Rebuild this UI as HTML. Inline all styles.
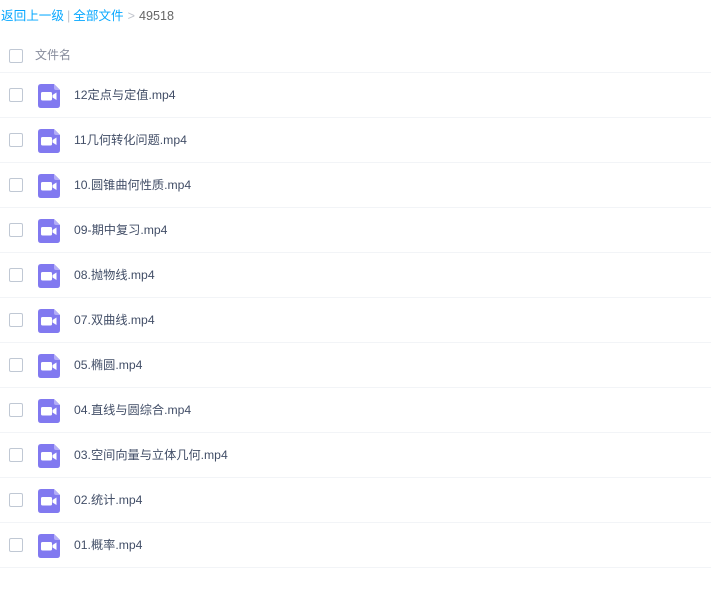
<!DOCTYPE html>
<html><head><meta charset="utf-8"><style>
body{margin:0;background:#fff;font-family:"Liberation Sans","Noto Sans CJK SC",sans-serif;font-size:12px;color:#424e67;width:711px;height:595px;overflow:hidden;position:relative}
.bc{position:absolute;left:1px;top:8px;line-height:16px;color:#06a7ff;font-size:12.6px}
.bc .g{color:#c0c4cc;margin:0 4px}
.bc .n{color:#666}
.bc .s{color:#c0c4cc;margin:0 3px}
.hd{position:absolute;left:0;top:40px;width:711px;height:32px;border-bottom:1px solid #f2f4f7}
.cb{position:absolute;left:9px;width:12px;height:12px;border:1px solid #c0c8d4;border-radius:2px;background:#fff}
.row{position:absolute;left:0;width:711px;height:44px;border-bottom:1px solid #f2f4f7}
.ic{position:absolute;left:38px;top:11px}
.nm{position:absolute;left:74px;top:14px;line-height:16px;font-size:12.2px;color:#424e67}
</style></head><body>
<div class="bc">返回上一级<span class="s">|</span>全部文件<span class="g">&gt;</span><span class="n">49518</span></div>
<div class="hd"><div class="cb" style="top:9px"></div><div style="position:absolute;left:35px;top:7px;line-height:16px;color:#878c9c">文件名</div></div>
<div id="rows"></div>
<script>
var n=["12定点与定值.mp4","11几何转化问题.mp4","10.圆锥曲何性质.mp4","09-期中复习.mp4","08.抛物线.mp4","07.双曲线.mp4","05.椭圆.mp4","04.直线与圆综合.mp4","03.空间向量与立体几何.mp4","02.统计.mp4","01.概率.mp4"];
var h="";
for(var i=0;i<n.length;i++){
h+='<div class="row" style="top:'+(73+i*45)+'px"><div class="cb" style="top:15px"></div>'+
'<svg class="ic" width="22" height="24" viewBox="0 0 22 24"><path d="M3 0H16L22 6V21Q22 24 19 24H3Q0 24 0 21V3Q0 0 3 0Z" fill="#8179f0"/><path d="M16 0L22 6H18Q16 6 16 4Z" fill="#b3adf7"/><rect x="3" y="8" width="11" height="8.5" rx="1.5" fill="#fff"/><path d="M14.5 11L18.5 8.5V16L14.5 13.5Z" fill="#fff"/></svg>'+
'<div class="nm">'+n[i]+'</div></div>';
}
document.getElementById("rows").innerHTML=h;
</script>
</body></html>
